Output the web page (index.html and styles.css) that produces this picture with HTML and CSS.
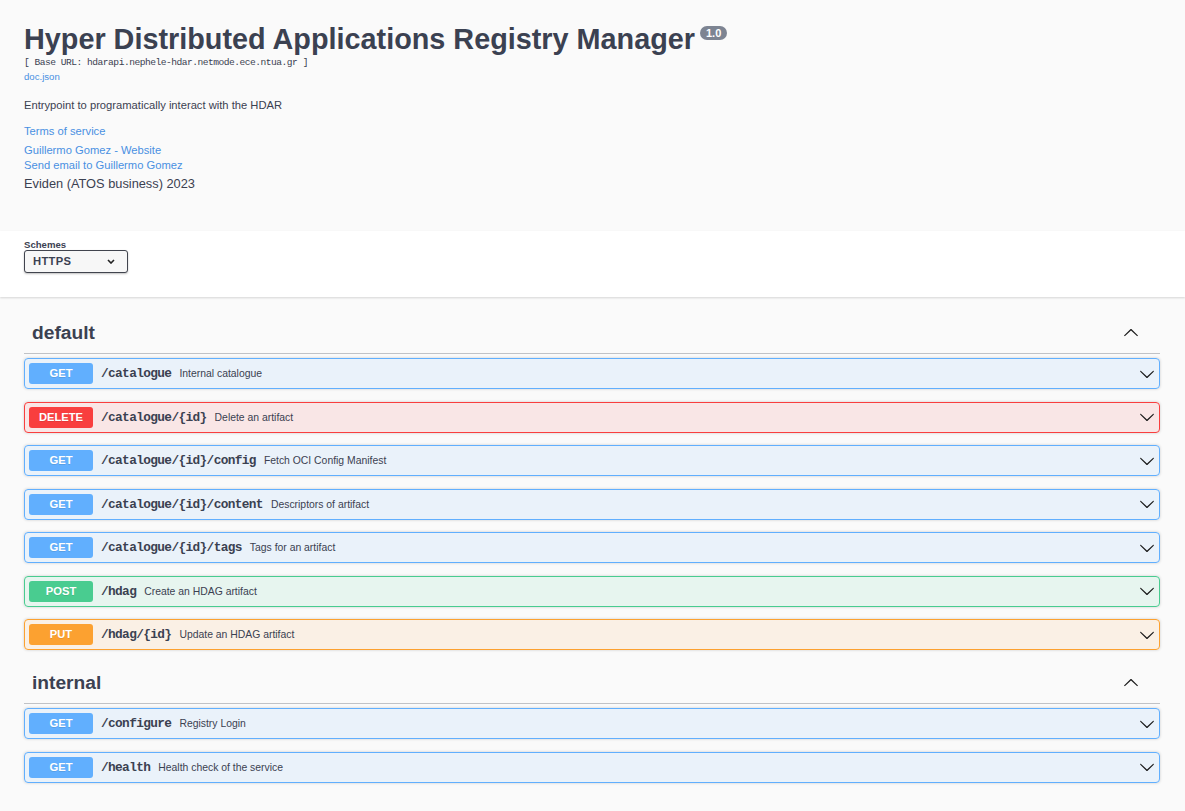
FILE: index.html
```html
<!DOCTYPE html>
<html lang="en">
<head>
<meta charset="utf-8">
<title>Hyper Distributed Applications Registry Manager</title>
<link rel="stylesheet" href="styles.css">
</head>
<body>
<div class="page">
  <section class="info">
    <hgroup class="info-head">
      <h2 class="title">Hyper Distributed Applications Registry Manager<span class="version">1.0</span></h2>
      <pre class="base-url">[ Base URL: hdarapi.nephele-hdar.netmode.ece.ntua.gr ]</pre>
      <a class="spec-link" href="#">doc.json</a>
    </hgroup>
    <p class="description">Entrypoint to programatically interact with the HDAR</p>
    <a class="info-link tos" href="#">Terms of service</a>
    <a class="info-link contact-site" href="#">Guillermo Gomez - Website</a>
    <a class="info-link contact-mail" href="#">Send email to Guillermo Gomez</a>
    <div class="license">Eviden (ATOS business) 2023</div>
  </section>

  <section class="schemes-bar">
    <div class="schemes">
      <span class="schemes-title">Schemes</span>
      <div class="select">
        <span class="select-value">HTTPS</span>
        <svg class="select-arrow" width="8" height="5" viewBox="0 0 8 5"><path d="M1 1l3 3 3-3" fill="none" stroke="#222" stroke-width="1.6"/></svg>
      </div>
    </div>
  </section>

  <main class="ops">
    <section class="tag-section">
      <div class="tag">
        <h3 class="tag-name">default</h3>
        <svg class="tag-arrow" width="16" height="16" viewBox="0 0 20 20"><path transform="rotate(180 10 10)" d="M17.418 6.109c.272-.268.709-.268.979 0s.271.701 0 .969l-7.908 7.83c-.27.268-.707.268-.979 0l-7.908-7.83c-.27-.268-.27-.701 0-.969.271-.268.709-.268.979 0L10 13.25l7.418-7.141z"/></svg>
      </div>
      <div class="op op-get"><span class="method">GET</span><span class="path">/catalogue</span><span class="summary">Internal catalogue</span><svg class="op-arrow" width="16" height="16" viewBox="0 0 20 20"><path d="M17.418 6.109c.272-.268.709-.268.979 0s.271.701 0 .969l-7.908 7.83c-.27.268-.707.268-.979 0l-7.908-7.83c-.27-.268-.27-.701 0-.969.271-.268.709-.268.979 0L10 13.25l7.418-7.141z"/></svg></div>
      <div class="op op-delete"><span class="method">DELETE</span><span class="path">/catalogue/{id}</span><span class="summary">Delete an artifact</span><svg class="op-arrow" width="16" height="16" viewBox="0 0 20 20"><path d="M17.418 6.109c.272-.268.709-.268.979 0s.271.701 0 .969l-7.908 7.83c-.27.268-.707.268-.979 0l-7.908-7.83c-.27-.268-.27-.701 0-.969.271-.268.709-.268.979 0L10 13.25l7.418-7.141z"/></svg></div>
      <div class="op op-get"><span class="method">GET</span><span class="path">/catalogue/{id}/config</span><span class="summary">Fetch OCI Config Manifest</span><svg class="op-arrow" width="16" height="16" viewBox="0 0 20 20"><path d="M17.418 6.109c.272-.268.709-.268.979 0s.271.701 0 .969l-7.908 7.83c-.27.268-.707.268-.979 0l-7.908-7.83c-.27-.268-.27-.701 0-.969.271-.268.709-.268.979 0L10 13.25l7.418-7.141z"/></svg></div>
      <div class="op op-get"><span class="method">GET</span><span class="path">/catalogue/{id}/content</span><span class="summary">Descriptors of artifact</span><svg class="op-arrow" width="16" height="16" viewBox="0 0 20 20"><path d="M17.418 6.109c.272-.268.709-.268.979 0s.271.701 0 .969l-7.908 7.83c-.27.268-.707.268-.979 0l-7.908-7.83c-.27-.268-.27-.701 0-.969.271-.268.709-.268.979 0L10 13.25l7.418-7.141z"/></svg></div>
      <div class="op op-get"><span class="method">GET</span><span class="path">/catalogue/{id}/tags</span><span class="summary">Tags for an artifact</span><svg class="op-arrow" width="16" height="16" viewBox="0 0 20 20"><path d="M17.418 6.109c.272-.268.709-.268.979 0s.271.701 0 .969l-7.908 7.83c-.27.268-.707.268-.979 0l-7.908-7.83c-.27-.268-.27-.701 0-.969.271-.268.709-.268.979 0L10 13.25l7.418-7.141z"/></svg></div>
      <div class="op op-post"><span class="method">POST</span><span class="path">/hdag</span><span class="summary">Create an HDAG artifact</span><svg class="op-arrow" width="16" height="16" viewBox="0 0 20 20"><path d="M17.418 6.109c.272-.268.709-.268.979 0s.271.701 0 .969l-7.908 7.83c-.27.268-.707.268-.979 0l-7.908-7.83c-.27-.268-.27-.701 0-.969.271-.268.709-.268.979 0L10 13.25l7.418-7.141z"/></svg></div>
      <div class="op op-put"><span class="method">PUT</span><span class="path">/hdag/{id}</span><span class="summary">Update an HDAG artifact</span><svg class="op-arrow" width="16" height="16" viewBox="0 0 20 20"><path d="M17.418 6.109c.272-.268.709-.268.979 0s.271.701 0 .969l-7.908 7.83c-.27.268-.707.268-.979 0l-7.908-7.83c-.27-.268-.27-.701 0-.969.271-.268.709-.268.979 0L10 13.25l7.418-7.141z"/></svg></div>
    </section>

    <section class="tag-section">
      <div class="tag">
        <h3 class="tag-name">internal</h3>
        <svg class="tag-arrow" width="16" height="16" viewBox="0 0 20 20"><path transform="rotate(180 10 10)" d="M17.418 6.109c.272-.268.709-.268.979 0s.271.701 0 .969l-7.908 7.83c-.27.268-.707.268-.979 0l-7.908-7.83c-.27-.268-.27-.701 0-.969.271-.268.709-.268.979 0L10 13.25l7.418-7.141z"/></svg>
      </div>
      <div class="op op-get"><span class="method">GET</span><span class="path">/configure</span><span class="summary">Registry Login</span><svg class="op-arrow" width="16" height="16" viewBox="0 0 20 20"><path d="M17.418 6.109c.272-.268.709-.268.979 0s.271.701 0 .969l-7.908 7.83c-.27.268-.707.268-.979 0l-7.908-7.83c-.27-.268-.27-.701 0-.969.271-.268.709-.268.979 0L10 13.25l7.418-7.141z"/></svg></div>
      <div class="op op-get"><span class="method">GET</span><span class="path">/health</span><span class="summary">Health check of the service</span><svg class="op-arrow" width="16" height="16" viewBox="0 0 20 20"><path d="M17.418 6.109c.272-.268.709-.268.979 0s.271.701 0 .969l-7.908 7.83c-.27.268-.707.268-.979 0l-7.908-7.83c-.27-.268-.27-.701 0-.969.271-.268.709-.268.979 0L10 13.25l7.418-7.141z"/></svg></div>
    </section>
  </main>
</div>
</body>
</html>
```

FILE: styles.css
```css
html, body {
  margin: 0;
  padding: 0;
  background: #fafafa;
}

body {
  font-family: "Liberation Sans", Arial, sans-serif;
  color: #3b4151;
}

.page {
  display: flex;
  flex-direction: column;
}

/* ---------- info ---------- */
.info {
  display: flex;
  flex-direction: column;
  align-items: flex-start;
  padding: 21px 24px 40px;
}

.info-head {
  display: flex;
  flex-direction: column;
  align-items: flex-start;
  margin: 0 0 16px;
}

.title {
  margin: 0;
  font-size: 28.8px;
  line-height: 36px;
  font-weight: 700;
  color: #3b4151;
  white-space: nowrap;
}

.version {
  display: inline-block;
  vertical-align: top;
  margin: 5px 0 0 5px;
  padding: 1px 6px;
  border-radius: 57px;
  background: #7d8492;
  color: #fff;
  font-size: 11px;
  line-height: 12px;
  font-weight: 700;
}

.base-url {
  margin: 0;
  font-family: "Liberation Mono", "DejaVu Sans Mono", monospace;
  font-size: 9.6px;
  line-height: 12px;
  letter-spacing: -0.5px;
  color: #3b4151;
}

.spec-link {
  margin-top: 2px;
  font-size: 9.6px;
  line-height: 12px;
  color: #4990e2;
  text-decoration: none;
}

.description {
  margin: 0;
  font-size: 11.2px;
  line-height: 13px;
}

.info-link {
  font-size: 11.2px;
  line-height: 13px;
  color: #4990e2;
  text-decoration: none;
}

.tos { margin-top: 12.5px; }
.contact-site { margin-top: 6.5px; }
.contact-mail { margin-top: 2px; }

.license {
  margin-top: 4px;
  font-size: 12.8px;
  line-height: 15px;
}

/* ---------- schemes ---------- */
.schemes-bar {
  background: #fff;
  box-shadow: 0 1px 2px 0 rgba(0, 0, 0, .15);
  padding: 8px 24px 24px;
}

.schemes {
  display: flex;
  flex-direction: column;
  align-items: flex-start;
}

.schemes-title {
  font-size: 9.6px;
  line-height: 11px;
  font-weight: 700;
}

.select {
  box-sizing: border-box;
  width: 104px;
  height: 22.7px;
  display: flex;
  align-items: center;
  justify-content: space-between;
  padding: 0 12px 0 8px;
  border: 1px solid #41444e;
  border-radius: 3px;
  box-shadow: 0 1px 2px 0 rgba(0, 0, 0, .25);
  background: #f7f7f7;
}

.select-value {
  font-size: 11.2px;
  font-weight: 700;
  letter-spacing: 0.3px;
  color: #3b4151;
}

/* ---------- operations ---------- */
.ops {
  padding: 16px 25px 40px 24px;
}

.tag-section {
  display: flex;
  flex-direction: column;
}

.tag {
  display: flex;
  align-items: center;
  padding: 8px 16px 8px 8px;
  border-bottom: 1px solid rgba(59, 65, 81, .3);
  margin-bottom: 4px;
}

.tag-name {
  flex: 1;
  margin: 0;
  font-size: 19.2px;
  line-height: 24.5px;
  font-weight: 700;
  color: #3b4151;
}

.tag-arrow {
  margin-right: 5px;
  fill: #1b1b1b;
}

.op {
  display: flex;
  align-items: center;
  padding: 4px;
  border: 1px solid;
  border-radius: 4px;
  box-shadow: 0 0 3px rgba(0, 0, 0, .19);
  margin-bottom: 12.5px;
}

.method {
  box-sizing: border-box;
  width: 64px;
  height: 21px;
  line-height: 21px;
  border-radius: 3px;
  color: #fff;
  font-size: 11.2px;
  font-weight: 700;
  text-align: center;
  text-shadow: 0 1px 0 rgba(0, 0, 0, .1);
}

.path {
  padding: 0 8px;
  font-family: "Liberation Mono", "DejaVu Sans Mono", monospace;
  font-size: 12.8px;
  font-weight: 700;
  letter-spacing: -0.64px;
  color: #3b4151;
}

.summary {
  flex: 1;
  font-size: 10.4px;
  color: #3b4151;
}

.op-arrow {
  fill: #1b1b1b;
}

.op-get { background: rgba(97, 175, 254, .1); border-color: #61affe; }
.op-get .method { background: #61affe; }

.op-delete { background: rgba(249, 62, 62, .1); border-color: #f93e3e; }
.op-delete .method { background: #f93e3e; }

.op-post { background: rgba(73, 204, 144, .1); border-color: #49cc90; }
.op-post .method { background: #49cc90; }

.op-put { background: rgba(252, 161, 48, .1); border-color: #fca130; }
.op-put .method { background: #fca130; }
```
